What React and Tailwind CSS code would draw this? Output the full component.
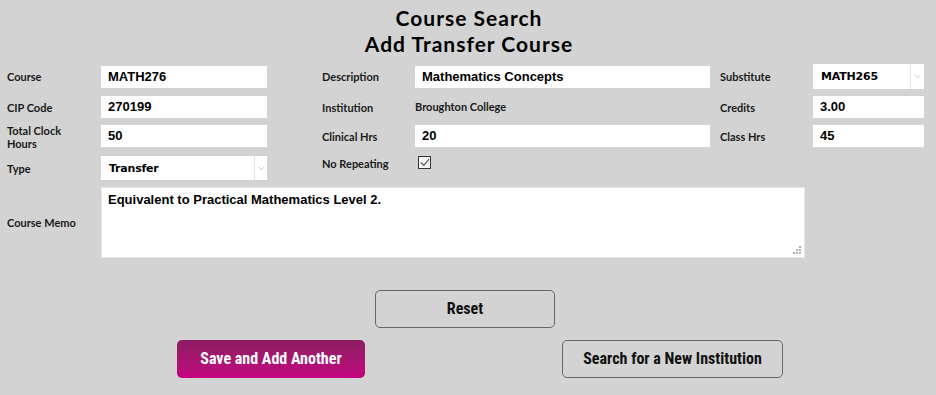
import { ChevronDown } from "lucide-react";

const label = "text-[11px] font-bold text-[#1a1a1a] leading-[13px] [font-family:'Lato','DejaVu_Sans',sans-serif]";
const field = "bg-white h-[22px] flex items-center pl-[7px] text-[13px] font-bold text-black [font-family:'Liberation_Sans',Arial,sans-serif]";

function Select({ value, width, divider }) {
  return (
    <div className={`bg-white h-full flex ${width}`}>
      <div className="flex-1 flex items-center pl-[8px] pt-[2px] text-[11px] font-bold text-black [font-family:'DejaVu_Sans',sans-serif] tracking-[-0.2px]">
        {value}
      </div>
      <div className={`${divider} border-l border-[#e3e3e3] flex items-center justify-center`}>
        <ChevronDown size={9} strokeWidth={1.5} className="text-[#a0a0a0]" />
      </div>
    </div>
  );
}

function Btn({ children, className }) {
  return (
    <button
      className={`rounded-[5px] text-[16px] font-bold [font-family:'Liberation_Sans_Narrow','Arial_Narrow','Roboto_Condensed',sans-serif] ${className}`}
    >
      {children}
    </button>
  );
}

export default function App() {
  return (
    <div className="w-[936px] h-[395px] bg-[#d3d3d3] overflow-hidden">
      {/* heading */}
      <div className="pt-[5px] pl-[2px] text-center text-[21px] leading-[26px] font-bold tracking-[1px] text-black [font-family:'Lato','DejaVu_Sans',sans-serif]">
        <div>Course Search</div>
        <div>Add Transfer Course</div>
      </div>

      {/* form rows */}
      <div className="pl-[7px] mt-[7px]">
        <div className="flex items-center h-[25px]">
          <div className={`w-[94px] ${label}`}>Course</div>
          <div className={`w-[166px] ${field}`}>MATH276</div>
          <div className="w-[55px]" />
          <div className={`w-[93px] ${label}`}>Description</div>
          <div className={`w-[295px] ${field}`}>Mathematics Concepts</div>
          <div className="w-[10px]" />
          <div className={`w-[93px] ${label}`}>Substitute</div>
          <Select value="MATH265" width="w-[111px]" divider="w-[14px]" />
        </div>

        <div className="flex items-center h-[22px] mt-[7px]">
          <div className={`w-[94px] ${label}`}>CIP Code</div>
          <div className={`w-[166px] ${field}`}>270199</div>
          <div className="w-[55px]" />
          <div className={`w-[93px] ${label}`}>Institution</div>
          <div className="w-[295px] text-[11px] font-bold text-[#1a1a1a] [font-family:'Lato','DejaVu_Sans',sans-serif]">
            Broughton College
          </div>
          <div className="w-[10px]" />
          <div className={`w-[93px] ${label}`}>Credits</div>
          <div className={`w-[111px] ${field}`}>3.00</div>
        </div>

        <div className="flex items-center h-[22px] mt-[7px]">
          <div className={`w-[94px] pt-[2px] ${label}`}>
            Total Clock
            <br />
            Hours
          </div>
          <div className={`w-[166px] ${field}`}>50</div>
          <div className="w-[55px]" />
          <div className={`w-[93px] ${label}`}>Clinical Hrs</div>
          <div className={`w-[295px] ${field}`}>20</div>
          <div className="w-[10px]" />
          <div className={`w-[93px] ${label}`}>Class Hrs</div>
          <div className={`w-[111px] ${field}`}>45</div>
        </div>

        <div className="flex items-start h-[24px] mt-[9px]">
          <div className={`w-[94px] pt-[6px] ${label}`}>Type</div>
          <div className="h-[24px]">
            <Select value="Transfer" width="w-[166px]" divider="w-[13px]" />
          </div>
          <div className="w-[55px]" />
          <div className={`w-[96px] pt-[1px] ${label}`}>No Repeating</div>
          <div className="w-[13px] h-[13px] border border-[#333] bg-[#f4f4f4] flex items-center justify-center">
            <svg width="10" height="9" viewBox="0 0 10 9">
              <path d="M1 4.5 L3.8 7.3 L9 1.2" fill="none" stroke="#555" strokeWidth="1.2" />
            </svg>
          </div>
        </div>

        <div className="flex items-center mt-[7px]">
          <div className={`w-[94px] ${label}`}>Course Memo</div>
          <div className="relative w-[704px] h-[71px] bg-white border border-[#e6e6e6] pl-[6px] pt-[2px] text-[13px] font-bold text-black [font-family:'Liberation_Sans',Arial,sans-serif]">
            Equivalent to Practical Mathematics Level 2.
            <svg className="absolute right-[2px] bottom-[2px]" width="9" height="9" viewBox="0 0 9 9">
              <rect x="6" y="0" width="2" height="2" fill="#b0b0b0" />
              <rect x="3" y="3" width="2" height="2" fill="#b0b0b0" />
              <rect x="6" y="3" width="2" height="2" fill="#b0b0b0" />
              <rect x="0" y="6" width="2" height="2" fill="#b0b0b0" />
              <rect x="3" y="6" width="2" height="2" fill="#b0b0b0" />
              <rect x="6" y="6" width="2" height="2" fill="#b0b0b0" />
            </svg>
          </div>
        </div>
      </div>

      {/* buttons */}
      <div className="flex mt-[32px] pl-[375px]">
        <Btn className="w-[180px] h-[38px] border border-[#666] text-[#111]">Reset</Btn>
      </div>
      <div className="flex mt-[12px] pl-[177px]">
        <Btn className="w-[188px] h-[38px] text-white bg-gradient-to-b from-[#8c1d62] to-[#c4007f]">
          Save and Add Another
        </Btn>
        <Btn className="w-[221px] h-[38px] ml-[197px] border border-[#666] text-[#111]">
          Search for a New Institution
        </Btn>
      </div>
    </div>
  );
}
